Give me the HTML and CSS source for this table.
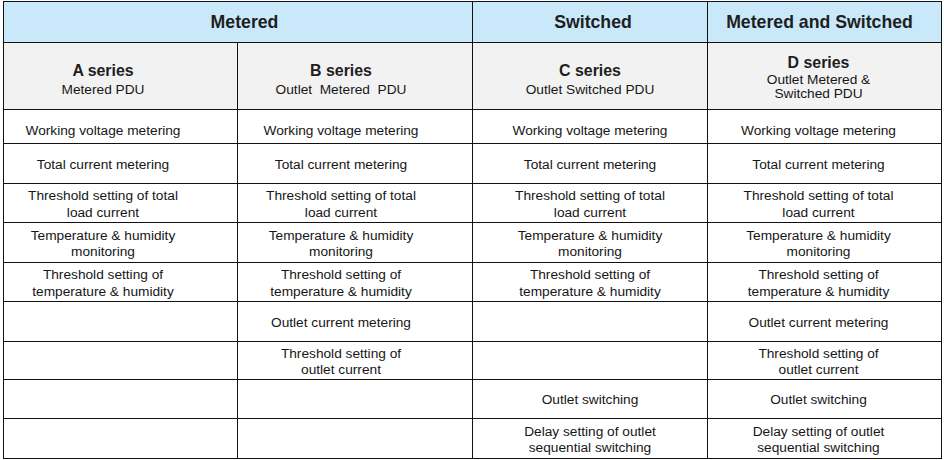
FILE: index.html
```html
<!DOCTYPE html>
<html>
<head>
<meta charset="utf-8">
<link rel="stylesheet" href="styles.css">
</head>
<body>
<div class="page">
  <div class="grid">
    <div class="cell head head-m">Metered</div>
    <div class="cell head head-s">Switched</div>
    <div class="cell head head-ms">Metered and Switched</div>

    <div class="cell sub col-a"><div class="title">A series</div><div class="desc">Metered PDU</div></div>
    <div class="cell sub col-b"><div class="title">B series</div><div class="desc">Outlet&nbsp; Metered&nbsp; PDU</div></div>
    <div class="cell sub col-c"><div class="title">C series</div><div class="desc">Outlet Switched PDU</div></div>
    <div class="cell sub sub-d col-d"><div class="title">D series</div><div class="desc tight">Outlet Metered &amp;<br>Switched PDU</div></div>

    <div class="cell data first col-a">Working voltage metering</div>
    <div class="cell data first col-b">Working voltage metering</div>
    <div class="cell data first col-c">Working voltage metering</div>
    <div class="cell data first col-d">Working voltage metering</div>

    <div class="cell data col-a">Total current metering</div>
    <div class="cell data col-b">Total current metering</div>
    <div class="cell data col-c">Total current metering</div>
    <div class="cell data col-d">Total current metering</div>

    <div class="cell data col-a">Threshold setting of total<br>load current</div>
    <div class="cell data col-b">Threshold setting of total<br>load current</div>
    <div class="cell data col-c">Threshold setting of total<br>load current</div>
    <div class="cell data col-d">Threshold setting of total<br>load current</div>

    <div class="cell data col-a">Temperature &amp; humidity<br>monitoring</div>
    <div class="cell data col-b">Temperature &amp; humidity<br>monitoring</div>
    <div class="cell data col-c">Temperature &amp; humidity<br>monitoring</div>
    <div class="cell data col-d">Temperature &amp; humidity<br>monitoring</div>

    <div class="cell data col-a">Threshold setting of<br>temperature &amp; humidity</div>
    <div class="cell data col-b">Threshold setting of<br>temperature &amp; humidity</div>
    <div class="cell data col-c">Threshold setting of<br>temperature &amp; humidity</div>
    <div class="cell data col-d">Threshold setting of<br>temperature &amp; humidity</div>

    <div class="cell data col-a"></div>
    <div class="cell data col-b">Outlet current metering</div>
    <div class="cell data col-c"></div>
    <div class="cell data col-d">Outlet current metering</div>

    <div class="cell data col-a"></div>
    <div class="cell data col-b">Threshold setting of<br>outlet current</div>
    <div class="cell data col-c"></div>
    <div class="cell data col-d">Threshold setting of<br>outlet current</div>

    <div class="cell data col-a"></div>
    <div class="cell data col-b"></div>
    <div class="cell data col-c">Outlet switching</div>
    <div class="cell data col-d">Outlet switching</div>

    <div class="cell data col-a"></div>
    <div class="cell data col-b"></div>
    <div class="cell data col-c">Delay setting of outlet<br>sequential switching</div>
    <div class="cell data col-d">Delay setting of outlet<br>sequential switching</div>
  </div>
</div>
</body>
</html>
```

FILE: styles.css
```css
html, body {
  margin: 0;
  padding: 0;
  background: #ffffff;
}

body {
  font-family: "Liberation Sans", Arial, sans-serif;
  color: #161616;
}

.page {
  padding: 1px 0 0 3px;
}

.grid {
  display: grid;
  grid-template-columns: 234px 235px 235px 234px;
  grid-template-rows: 41px 67px 34px 40px 39px 40px 39px 40px 38px 39px 40px;
  border-left: 1px solid #111;
  border-top: 1px solid #111;
  width: 938px;
}

.cell {
  box-sizing: border-box;
  border-right: 1px solid #111;
  border-bottom: 1px solid #111;
  display: flex;
  flex-direction: column;
  align-items: center;
  justify-content: center;
  text-align: center;
}

.head {
  background: #c9e9fb;
  font-weight: bold;
  font-size: 17.7px;
  color: #1e1e1e;
}

.head-m {
  grid-column: span 2;
  padding-left: 13px;
}

.head-s {
  padding-left: 6px;
}

.head-ms {
  padding-right: 10px;
}

.sub {
  background: #f2f2f2;
  padding-top: 8px;
}

.sub-d {
  padding-top: 2px;
}

.sub .title {
  font-weight: bold;
  font-size: 15.9px;
  line-height: 20px;
  color: #1e1e1e;
}

.sub .desc {
  font-size: 13.7px;
  line-height: 18px;
}

.sub .desc.tight {
  line-height: 14px;
}

.data {
  font-size: 13.7px;
  line-height: 16.5px;
  padding-top: 3px;
}

.data.first {
  padding-top: 10px;
}

.col-a {
  padding-right: 35px;
}

.col-b {
  padding-right: 28px;
}

.col-c {
  padding-right: 0;
}

.col-d {
  padding-right: 12px;
}
```
